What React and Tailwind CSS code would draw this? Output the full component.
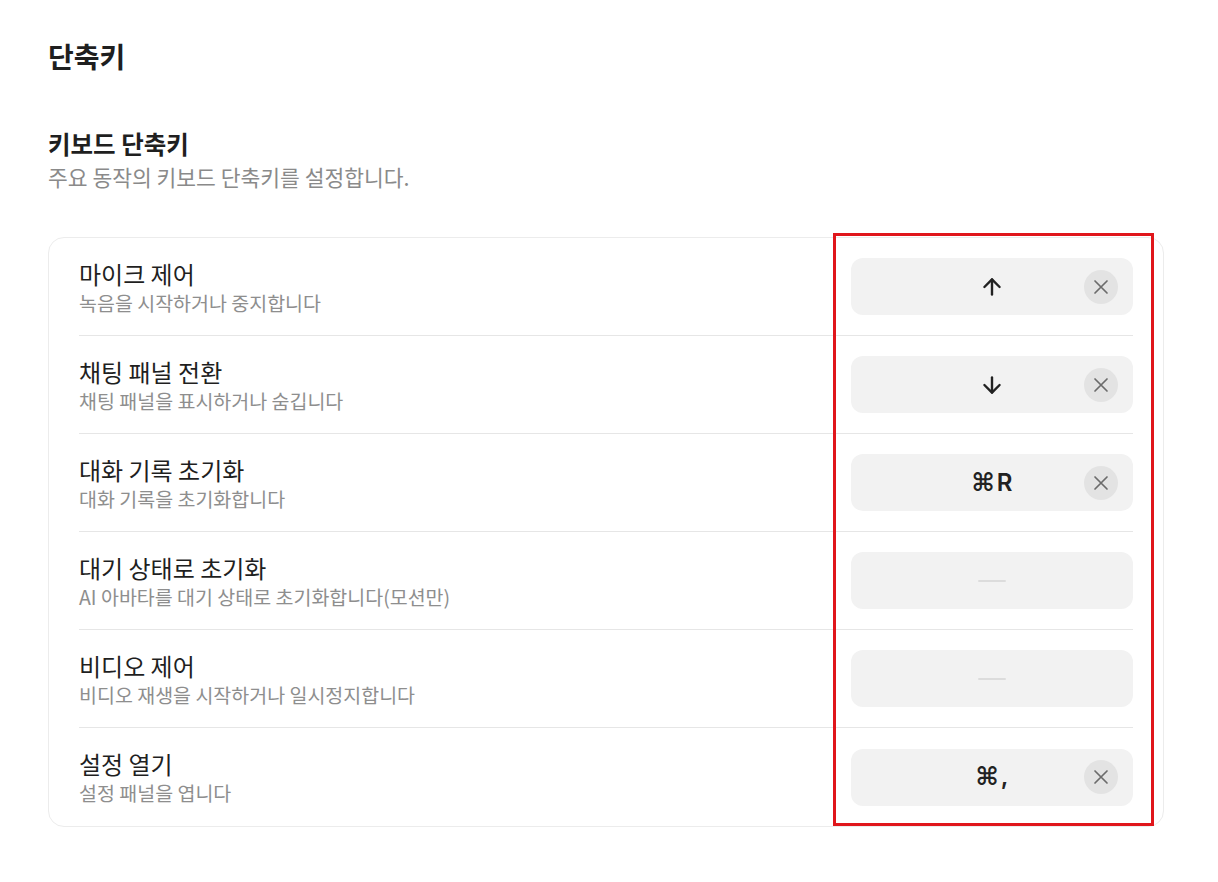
import React from 'react';
import { ArrowUp, ArrowDown } from 'lucide-react';

const shortcuts = [
  { title: '마이크 제어', desc: '녹음을 시작하거나 중지합니다', keys: 'up' },
  { title: '채팅 패널 전환', desc: '채팅 패널을 표시하거나 숨깁니다', keys: 'down' },
  { title: '대화 기록 초기화', desc: '대화 기록을 초기화합니다', keys: ['⌘', 'R'] },
  { title: '대기 상태로 초기화', desc: 'AI 아바타를 대기 상태로 초기화합니다(모션만)', keys: null },
  { title: '비디오 제어', desc: '비디오 재생을 시작하거나 일시정지합니다', keys: null },
  { title: '설정 열기', desc: '설정 패널을 엽니다', keys: ['⌘', ','] },
];

const XIcon = () => (
  <svg width="16" height="16" viewBox="0 0 16 16" fill="none" stroke="currentColor" strokeWidth="1.7" strokeLinecap="round">
    <path d="M2 2l12 12M14 2L2 14" />
  </svg>
);

const KeyLabel = ({ keys }) => {
  if (keys === 'up') return <ArrowUp size={26} strokeWidth={2.2} className="text-[#222]" />;
  if (keys === 'down') return <ArrowDown size={26} strokeWidth={2.2} className="text-[#222]" />;
  return (
    <span className="flex items-baseline text-[#222]">
      <span className="text-[25px] font-bold" style={{ fontFamily: '"DejaVu Sans", sans-serif' }}>{keys[0]}</span>
      <span className="text-[24px] font-semibold ml-[2px]" style={{ fontFamily: 'Inter, "Noto Sans", sans-serif' }}>{keys[1]}</span>
    </span>
  );
};

const ShortcutBox = ({ keys }) => (
  <div className="relative w-[282px] h-[57px] rounded-xl bg-[#f2f2f2] flex items-center justify-center">
    {keys ? (
      <>
        <KeyLabel keys={keys} />
        <button className="absolute right-[15px] top-1/2 -translate-y-1/2 w-[34px] h-[34px] rounded-full bg-[#e3e3e3] text-[#6b6b6b] flex items-center justify-center">
          <XIcon />
        </button>
      </>
    ) : (
      <span className="block w-[28px] h-[2px] bg-[#dcdcdc] rounded" />
    )}
  </div>
);

export default function App() {
  return (
    <div
      className="relative min-h-screen bg-white pl-12 pr-[54px] pt-9 pb-10"
      style={{ fontFamily: '"Noto Sans CJK KR", "Noto Sans", sans-serif' }}
    >
      <h1 className="text-[28px] font-bold leading-[40px] text-[#1f1f1f]">단축키</h1>

      <div className="mt-[52px]">
        <h2 className="text-[24.5px] font-bold leading-[32px] text-[#1f1f1f]">키보드 단축키</h2>
        <p className="mt-[3px] text-[21.5px] leading-[28px] text-[#8a8a8a]">주요 동작의 키보드 단축키를 설정합니다.</p>
      </div>

      <div className="mt-[46px] rounded-2xl border border-[#ececec] bg-white">
        {shortcuts.map((s, i) => (
          <div key={s.title} className="px-[30px]">
            <div
              className={`flex items-center justify-between h-[98px] ${
                i < shortcuts.length - 1 ? 'border-b border-[#e6e6e6]' : ''
              }`}
            >
              <div>
                <div className="text-[24px] leading-[32px] text-[#1f1f1f]">{s.title}</div>
                <div className="text-[19.5px] leading-[26px] text-[#8e8e8e]">{s.desc}</div>
              </div>
              <ShortcutBox keys={s.keys} />
            </div>
          </div>
        ))}
      </div>

      {/* highlight overlay */}
      <div className="absolute left-[833px] top-[233px] w-[321px] h-[593px] border-[3px] border-[#e0161b] pointer-events-none" />
    </div>
  );
}
